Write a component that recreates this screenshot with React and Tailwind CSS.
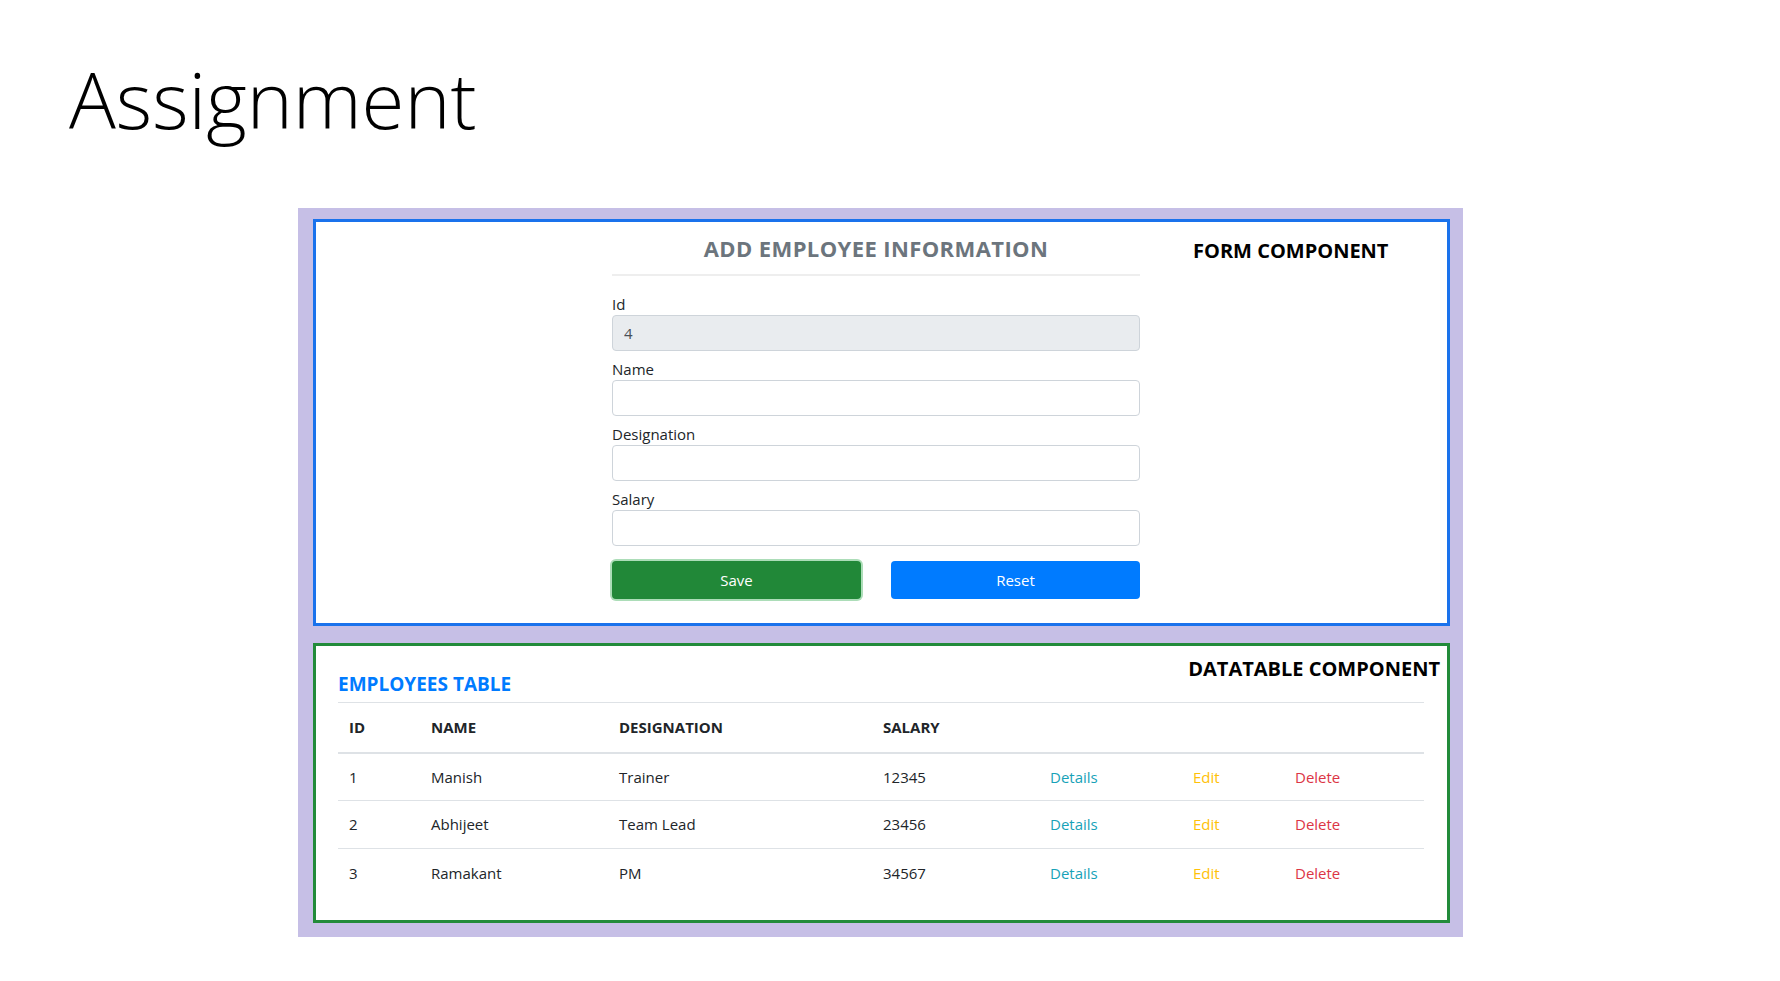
const employees = [
  { id: 1, name: 'Manish', designation: 'Trainer', salary: 12345 },
  { id: 2, name: 'Abhijeet', designation: 'Team Lead', salary: 23456 },
  { id: 3, name: 'Ramakant', designation: 'PM', salary: 34567 },
]

const fields = [
  { label: 'Id', value: '4', disabled: true },
  { label: 'Name', value: '' },
  { label: 'Designation', value: '' },
  { label: 'Salary', value: '' },
]

export default function App() {
  return (
    <div className="w-[1780px] h-[981px] bg-white overflow-hidden font-['Open_Sans',sans-serif] text-[#212529]">
      <h1 className="ml-[69px] pt-[60px] text-[78px] leading-[78px] font-light text-black">Assignment</h1>

      <div className="ml-[298px] mt-[70px] w-[1165px] bg-[#c6bfe6] pl-[15px] pr-[13px] pt-[11px] pb-[14px]">
        <FormPanel />
        <TablePanel />
      </div>
    </div>
  )
}

function FormPanel() {
  return (
    <div className="h-[407px] border-[3px] border-[#1a72ec] bg-white flex pl-[296px]">
      <div className="w-[528px] pt-[12px]">
        <h2 className="text-center text-[22px] leading-[29px] font-bold tracking-[0.4px] text-[#6c757d]">ADD EMPLOYEE INFORMATION</h2>
        <div className="mt-[11px] h-[2px] bg-[#eeeeee]" />
        <div className="mt-[17px] flex flex-col gap-[7px]">
          {fields.map((f) => (
            <label key={f.label} className="flex flex-col">
              <span className="text-[15px] leading-[22px]">{f.label}</span>
              <input
                type="text"
                defaultValue={f.value}
                readOnly={f.disabled}
                className={`h-[36px] w-full rounded-[4px] border border-[#ced4da] px-[11px] text-[15px] text-[#495057] outline-none ${f.disabled ? 'bg-[#e9ecef]' : 'bg-white'}`}
              />
            </label>
          ))}
        </div>
        <div className="mt-[15px] grid grid-cols-2 gap-[30px]">
          <button type="button" className="h-[38px] rounded-[4px] bg-[#218838] text-white text-[15px] shadow-[0_0_0_2px_rgba(72,180,97,0.45)]">
            Save
          </button>
          <button type="button" className="h-[38px] rounded-[4px] bg-[#007bff] text-white text-[15px]">
            Reset
          </button>
        </div>
      </div>
      <div className="ml-[53px] pt-[15px] text-[20px] leading-[28px] font-bold text-black whitespace-nowrap">FORM COMPONENT</div>
    </div>
  )
}

function TablePanel() {
  const cols = [
    ['ID', 'w-[82px]'],
    ['NAME', 'w-[188px]'],
    ['DESIGNATION', 'w-[264px]'],
    ['SALARY', 'w-[167px]'],
    ['', 'w-[143px]'],
    ['', 'w-[102px]'],
    ['', 'w-[140px]'],
  ]
  return (
    <div className="mt-[17px] h-[280px] border-[3px] border-[#228b3a] bg-white">
      <div className="flex justify-between pl-[22px] pr-[7px] pt-[9px]">
        <h3 className="mt-[16px] text-[19px] leading-[26px] font-bold text-[#007bff]">EMPLOYEES TABLE</h3>
        <div className="text-[20px] leading-[28px] font-bold text-black whitespace-nowrap">DATATABLE COMPONENT</div>
      </div>
      <div className="pl-[22px] pr-[23px] mt-[5px]">
        <table className="w-[1086px] border-collapse text-[15px] text-left">
          <thead>
            <tr>
              {cols.map(([c, w], i) => (
                <th key={i} className={`${w} h-[50px] pl-[11px] font-bold border-t border-[#dee2e6] border-b-2`}>{c}</th>
              ))}
            </tr>
          </thead>
          <tbody>
            {employees.map((e, i) => (
              <tr key={e.id} className={i > 0 ? 'border-t border-[#dee2e6]' : ''}>
                <td className="h-[48px] pl-[11px]">{e.id}</td>
                <td className="pl-[11px]">{e.name}</td>
                <td className="pl-[11px]">{e.designation}</td>
                <td className="pl-[11px]">{e.salary}</td>
                <td className="pl-[11px] text-[#17a2b8]">Details</td>
                <td className="pl-[11px] text-[#ffc107]">Edit</td>
                <td className="pl-[11px] text-[#dc3545]">Delete</td>
              </tr>
            ))}
          </tbody>
        </table>
      </div>
    </div>
  )
}
